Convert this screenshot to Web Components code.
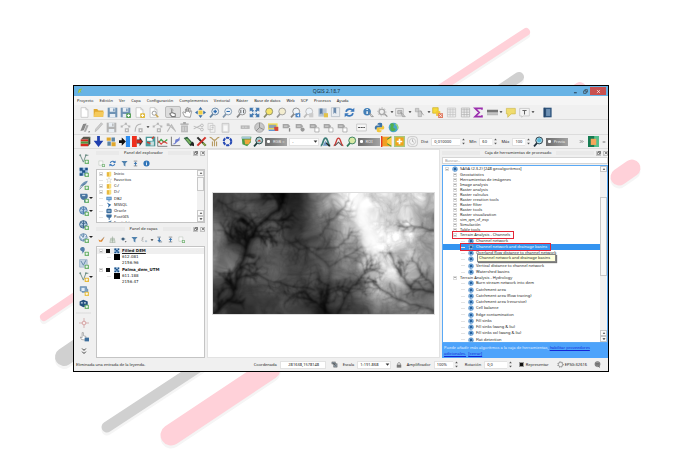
<!DOCTYPE html>
<html lang="es">
<head>
<meta charset="utf-8">
<title>QGIS 2.18.7</title>
<style>
html,body{margin:0;height:100%}
body{background:#fff;font:4px/6px "Noto Sans","Open Sans",sans-serif;color:#222}
</style>
</head>
<body>
<qgis-page></qgis-page>
<script>
const RESET = `*{box-sizing:border-box}button,input,select{font:inherit;color:inherit;margin:0;padding:0;border:0;background:none;border-radius:0;appearance:none;-webkit-appearance:none;min-width:0;outline:none}`;
function define(name, html, setup) {
  customElements.define(name, class extends HTMLElement {
    connectedCallback() {
      if (this.shadowRoot) return;
      const root = this.attachShadow({mode: 'open'});
      root.innerHTML = typeof html === 'function' ? html(this) : html;
      if (setup) setup(this, root);
    }
  });
}

/* ---------- icons, 16 x 16 grid ---------- */
const B = '#3f72a8', G = '#aaa';
const plus = (c = '#6fb36f') => `<rect x="9" y="9" width="7" height="7" rx="1" fill="${c}"/><path d="M12.500 10.500v4M10.500 12.500h4" stroke="#fff" stroke-width="1.500"/>`;
const lens = (c, inner = '', f = '#eef3f8') => `<path d="M6 10L1.500 15" stroke="${c}" stroke-width="2.500"/><circle cx="9" cy="6.500" r="5" fill="${f}" stroke="${c}" stroke-width="1.300"/>${inner}`;
const page = (x = '') => `<path d="M3 1h7l3 3v11H3z" fill="#fff" stroke="#bbb"/><path d="M10 1v3h3" fill="none" stroke="#bbb"/>${x}`;
const disk = c => `<path d="M1 1h14v14H1z" fill="${c}"/><path d="M4 1h8v6H4zM4 10h8v5H4z" fill="#e8eef4"/><path d="M9 2h2v4H9z" fill="${c}"/>`;
const label = (x, c = '#a5a5a5') => `<path d="M1 3h8l3 3-3 3H1z" fill="${c}"/><path d="M3 6h5" stroke="#eee"/>${x}`;
const sheet = c => `<path d="M2 1.500h12v13H2z" fill="#eee" stroke="${c}"/><path d="M2 4h12M2 7.500h12M2 11h12M6 2v12M10 2v12" stroke="${c}"/>`;
const globe = c => `<circle cx="7" cy="7" r="6" fill="#b8cfe4" stroke="${c}" stroke-width="1.300"/><path d="M2 5c4-3 4 4 6 1s3-1 4 0M3 10c3-2 5 2 8-1M7 1v12" fill="none" stroke="${c}" stroke-width="1.400"/>`;
const checker = `<path d="M1 1h13v13H1z" fill="#9fc0e2"/><path d="M1 1h5v4h4V1h4v4h-4v4h4v5H9V9H6v5H1v-4h4V6H1z" fill="#1d5288"/>`;
const vee = `<path d="M2 2l5 11 4-11h4" fill="none" stroke="#6f8f86" stroke-width="1.500"/><circle cx="2" cy="2" r="1.500" fill="#6f8f86"/><circle cx="11" cy="2" r="1.500" fill="#6f8f86"/>`;
const ICON = {
  logo: `<path d="M2 14L5 3l9-2-3 5-2 1 3 6-4-3z" fill="#8bbf3a"/><path d="M5 12l4-7" stroke="#e8d34a" stroke-width="2"/>`,
  page: page(),
  folder: `<path d="M1 3h5l2 2h7v9H1z" fill="#e0a82e"/><path d="M3 7h13l-2 7H1z" fill="#f5ca5b"/>`,
  save: disk('#6f93b5'), saveas: disk('#6f93b5') + plus('#5ba15b'),
  composer: page(plus('#e0b93c')), composers: page('<circle cx="9" cy="9" r="3" fill="none" stroke="#777"/><path d="M11 11l4 4" stroke="#c9a44b" stroke-width="2"/>'),
  touch: `<path d="M7 8l5 2v4H7l-3-4zM7 9V2" fill="#fff" stroke="#777" stroke-width="1.500"/><path d="M4 2l6 3" stroke="#aaa"/>`,
  hand: `<path d="M4 14L1 8l2-1 2 2V3h2v4V1h2v6l1-5h2l-1 6 2-3 1 1-2 9z" fill="#fff" stroke="#777"/>`,
  pansel: `<path d="M8 0l3 4H5zM8 16l-3-4h6zM0 8l4-3v6zM16 8l-4 3V5z" fill="#3a6ea5"/><path d="M5 5h6v6H5z" fill="#f0cf45"/>`,
  zin: lens('#60809f', '<path d="M6.500 6.500h5M9 4v5" stroke="#2d6cb0" stroke-width="2"/>'),
  zout: lens('#7d93aa', '<path d="M6.500 6.500h5" stroke="#2d6cb0" stroke-width="1.500"/>'),
  z11: lens('#888', '<path d="M7 4v5M11 4v5" stroke="#555" stroke-width="1.300"/>'),
  zfull: `<path d="M1 1h6L5 3l3 3-2 2-3-3-2 2zM15 1v6l-2-2-3 3-2-2 3-3-2-2zM1 15V9l2 2 3-3 2 2-3 3 2 2zM15 15H9l2-2-3-3 2-2 3 3 2-2z" fill="#4278b0"/><path d="M6 6h4v4H6z" fill="#dbe7f3"/>`,
  zsel: lens('#8a8a6a', '', '#f5e46a'), zlay: lens('#999', '', '#f3edd0'),
  zprev: lens('#888', '<path d="M15 9v6H8v-6z" fill="#4d86c6"/><path d="M13 10l-3 2 3 2" fill="#fff"/>'),
  znext: lens('#bbb', '<path d="M15 9v6H9v-6z" fill="#ccc"/>'),
  bmnew: `<path d="M2 2h12v12H2z" fill="#b9c6d3"/><path d="M4 2h4v9L6 9l-2 2z" fill="#5d7fa5"/><path d="M10 9h6v6h-6z" fill="#e2c24a"/>`,
  bm: `<path d="M2 1h12v13H2z" fill="#e9edf1" stroke="#aab4bf"/><path d="M5 1h4v9L7 8l-2 2z" fill="#6c8aac"/>`,
  refresh: `<path d="M3 7c1-5 8-5 10-2M13 9c-1 5-8 5-10 2" fill="none" stroke="#3b78bb" stroke-width="2.500"/><path d="M15 1v6H9zM1 15V9h6z" fill="#3b78bb"/>`,
  ident: `<circle cx="6" cy="7" r="5.500" fill="#4480b8"/><path d="M6 6v4M6 3v1.500" stroke="#fff" stroke-width="2"/><path d="M9 8l6 6h-3z" fill="#fff" stroke="#777"/>`,
  gear: `<circle cx="7" cy="7" r="4" fill="none" stroke="${G}" stroke-width="2" /><circle cx="7" cy="7" r="6" fill="none" stroke="${G}" stroke-dasharray="2 2.500"/><path d="M11 10l4 4" stroke="#999" stroke-width="2"/>`,
  select: `<path d="M1 2h11v11H1z" fill="#eee" stroke="${G}"/><path d="M4 5h6v5H4zM8 7l7 7h-4z" fill="#ccc" stroke="#999"/>`,
  selform: `<path d="M2 2h5v5H2zM6 6h5v8H6z" fill="#ccc" stroke="#aaa"/><path d="M9 5l5 7" stroke="#888"/>`,
  deselect: `<path d="M1 1h8v8H1z" fill="#f6db3a" stroke="#c9ad28"/><path d="M6 6h6v7H6z" fill="#f3c93a"/><path d="M9 9h7v7H9z" fill="#e07b62"/><path d="M10.500 10.500l4 4m0-4l-4 4" stroke="#fff"/>`,
  table: sheet('#c2c2c2'), calc: sheet('#b0b0b0') , sigma: `<path d="M13 4V2H3l6 6-6 6h10v-2" fill="none" stroke="#9b2fae" stroke-width="2.500"/>`,
  ruler: `<path d="M0 4h16v4H0z" fill="#777"/><path d="M0 9h16v3H0z" fill="#bbb"/>`,
  tip: `<path d="M2 2h13v8H9l-5 5v-5H2z" fill="#f0dc6e" stroke="#cdb94d"/>`,
  text: `<path d="M1 2h14v11H6l-2 2v-2H1z" fill="#f4f4f4" stroke="#bbb"/><path d="M5 5h6M8 5v6" stroke="#666" stroke-width="1.500"/>`,
  book: `<path d="M2 1h12v14H2z" fill="#30567e"/><path d="M6 3h6v10H6z" fill="#6f92b5"/><path d="M4 1v14" stroke="#1b3858"/>`,
  pens: `<path d="M2 13L6 3l5-1-4 10z" fill="#888"/><path d="M7 14L11 4l3 1-4 9z" fill="#aaa"/><path d="M13 15h3l-1-2z" fill="#555"/>`,
  pen: `<path d="M3 14l1-4 8-9 2 2-8 9z" fill="#ccc" stroke="#b5b5b5"/>`,
  saveg: disk('#b4b4b4'),
  nodes: `<path d="M3 6l5-3 5 3" fill="none" stroke="#bbb"/><path d="M1 5h3v3H1zM7 1h3v3H7zM12 5h3v3h-3zM7 9h6v6H7z" fill="#b5b5b5"/><path d="M9 11h2v2H9z" fill="#fff"/>`,
  curve: `<path d="M3 14C3 6 7 3 12 3" fill="none" stroke="#b5b5b5" stroke-width="1.500"/><path d="M8 9h6v6H8z" fill="#b5b5b5"/><path d="M10 11h2v2h-2z" fill="#fff"/>`,
  nodetool: `<path d="M2 14L8 4l6 10M3 3l10 9" fill="none" stroke="#b9b9b9" stroke-width="1.500"/><path d="M1 2h4v4H1z" fill="#bbb"/>`,
  trash: `<path d="M3 5h10v10H3z" fill="#bbb"/><path d="M2 2h12v2H2zM6 0h4v2H6z" fill="#a8a8a8"/><path d="M6 7v6M10 7v6" stroke="#eee"/>`,
  cut: `<path d="M1 6l10 4M1 10l10-5" stroke="#bbb" stroke-width="1.500"/><circle cx="13" cy="5" r="2" fill="none" stroke="#aaa"/><circle cx="13" cy="11" r="2" fill="none" stroke="#aaa"/>`,
  copy: `<path d="M3 2h7v9H3zM6 5h7v10H6z" fill="#f2f2f2" stroke="#c2c2c2"/><path d="M8 8h3" stroke="#bbb"/>`,
  paste: `<path d="M3 2h10v13H3z" fill="#e2e2e2" stroke="#bdbdbd"/><path d="M5 5h6v8H5z" fill="#f8f8f8"/>`,
  lab: `<path d="M1 5h13v5H1z" fill="#b5b5b5"/><path d="M3 7.500h9" stroke="#eee" stroke-dasharray="3 1"/>`,
  diagram: `<circle cx="8" cy="8" r="7" fill="#c9c9c9" stroke="#999"/><path d="M8 8V1M8 8l6 3M8 8l-5 5" stroke="#777"/>`,
  labcolor: `<path d="M0 2h14v9H0z" fill="#f3dc4d"/><path d="M1 4h11v5H1z" fill="#8fa3b5"/><path d="M9 7h6v6H9z" fill="#d4483b"/><path d="M1 12h9" stroke="#5c8fcf" stroke-width="2"/>`,
  lab1: label('<path d="M11 9v5" stroke="#888" stroke-width="2"/>'), lab2: label('<circle cx="11" cy="11" r="3" fill="#999"/>'),
  lab3: label('<path d="M8.500 8.500h6v6h-6z" fill="#fff" stroke="#999"/>'),
  csw: `<path d="M1 3h14v10H1z" fill="#f7f7f7" stroke="#bbb"/><path d="M3 8h10" stroke="#555" stroke-width="1.500" stroke-dasharray="3 .8"/>`,
  python: `<path d="M8 1c4 0 4 1 4 4v3H6c-2 0-2 2-2 3H2c-2-3 0-6 2-6h4V4H5c0-2 1-3 3-3z" fill="#3c74a8"/><path d="M8 15c-4 0-4-1-4-4V8h6c2 0 2-2 2-3h1c4 3 1 6 0 6H8v1h3c0 2-1 3-3 3z" fill="#f2c63a"/>`,
  earth: `<circle cx="8" cy="8" r="7" fill="#4ba7c8"/><path d="M3 3c4-3 7 0 5 3s4 3 3 5-5 4-7 1 1-5-1-9z" fill="#52b04c"/><path d="M11 3c3 1 4 5 3 7" stroke="#9edb72" stroke-width="2" fill="none"/>`,
  cube: `<path d="M1 5l4-4h10l-3 4z" fill="#5a564b"/><path d="M1 5h11v3H1zM1 11h11v4H1z" fill="#d62b1f"/><path d="M1 8h11v3H1z" fill="#4e9a3e"/><path d="M12 5l3-4v10l-3 4z" fill="#31442a"/>`,
  down: `<path d="M6 0h4v7h5l-7 9-7-9h5z" fill="#1e3fae"/>`,
  bricks: `<path d="M1 2h6v5H1zM8 9h6v6H8z" fill="#e0a72c"/><path d="M8 2h5v6H8zM2 8h5v6H2z" fill="#5f86a5"/>`,
  inb: `<path d="M10 0h6v16h-6z" fill="#2d8df0"/><path d="M4 2l6 6-6 6v-4H0V6h4z" fill="#111"/>`,
  out: `<path d="M0 0h7v16H0z" fill="#ee2f1c"/><path d="M7 5h4V1l5 7-5 7v-4H7z" fill="#333"/><path d="M7 6h7v4H7z" fill="#d0271a"/>`,
  clip: `<path d="M1 1h14v14H1z" fill="#4b9a9b"/><path d="M3 3h8v4H3z" fill="#fff"/><path d="M3 9l10 4M10 4l3-3" stroke="#d43b2d" stroke-width="2"/><path d="M8 8h5v6H8z" fill="#c6e0e0"/>`,
  chart: `<path d="M1 1v14h14" fill="none" stroke="#555"/><path d="M2 10l4-5 4 4 5-4" fill="none" stroke="#3da349" stroke-width="2"/><path d="M2 7l4 5 4-4 5 3" fill="none" stroke="#dd3b3b" stroke-width="1.500"/>`,
  scatter: `<path d="M2 1v13h13" fill="none" stroke="#444"/><path d="M3 12l4-2 1-5 4-1 2-3v5l-4 3-3 3z" fill="#6d7bd0"/>`,
  sat: `<path d="M1 3l5-2 9 10-4 4z" fill="#2d5d3f"/><path d="M3 4l4 0 5 6-2 2z" fill="#79b35f"/><path d="M10 13l4-5 2 3v4z" fill="#222"/>`,
  tools: `<path d="M2 2l12 12" stroke="#2f2f2f" stroke-width="3"/><path d="M14 2L2 14" stroke="#d2332a" stroke-width="3"/><path d="M10 10l4 4" stroke="#87a44b" stroke-width="3"/>`,
  branch: `<path d="M8 15V5M8 6C4 6 6 2 1 2M8 6c4 0 2-4 7-4M5 15V8M11 15V8" fill="none" stroke="#b79b62" stroke-width="1.600"/>`,
  ring: `<circle cx="8" cy="8" r="5.500" fill="none" stroke="#274bb5" stroke-width="3" stroke-dasharray="4.500 1.300"/>`,
  poly: `<path d="M1 1h14l-1 8-5 6-7-3z" fill="#4d9b45"/><path d="M5 5h10l-4 7H6z" fill="#f0a63c"/><path d="M1 1h13v3H1z" fill="#a6c7d8"/>`,
  lens1: lens('#1f3c3c', '<path d="M6 8l3-3 3 3z" fill="#d9483a"/>', '#a9cfd0'),
  lens2: lens('#2d7a5a', '', '#d9e9a5'), lens3: lens('#1f2f3c', '<circle cx="9" cy="6" r="3" fill="#5cb9d9"/>', '#b5e0ea'),
  hist1: `<path d="M1 14c4 0 3-11 7-11s3 11 7 11" fill="none" stroke="#3b7d77" stroke-width="2.500"/><path d="M4 14l4-7 4 7z" fill="#7098c3"/><path d="M9 10l5 5" stroke="#222" stroke-width="2"/>`,
  hist2: `<path d="M1 14c4 0 3-11 7-11s3 11 7 11" fill="none" stroke="#c93a35" stroke-width="2"/><path d="M3 14l5-5 5 5" fill="none" stroke="#555" stroke-width="1.500"/>`,
  orange: `<path d="M1 1h14v14H1z" fill="#f0a023"/><path d="M15 1L9 6v5l6 4z" fill="#ffd044"/><path d="M9 5l6-4M9 11l6 4" stroke="#3e9c42" stroke-width="1.500"/><path d="M1 0v16" stroke="#e53a25" stroke-width="2"/>`,
  oplus: `<path d="M0 0h16v16H0z" fill="#a9c77b"/><path d="M2 2h12v12H2z" fill="#f2a419"/><path d="M8 4v8M4 8h8" stroke="#fff" stroke-width="2.500"/>`,
  clock: `<rect x="1" y="1" width="14" height="14" rx="4" fill="#f3f3f3" stroke="#b5b5b5"/><circle cx="8" cy="8" r="4.500" fill="none" stroke="#bbb"/><path d="M8 5v3l2 1" stroke="#999" fill="none"/>`,
  gate: `<path d="M0 0h16v16H0z" fill="#167c52"/><path d="M9 0h7v16H9z" fill="#55c08d"/><path d="M4 4h8v9H4z" fill="#f5a75b"/>`,
  vplus: vee + plus(), rplus: checker + plus(), feather: `<path d="M1 14C2 6 8 2 14 1c-1 6-7 8-11 9z" fill="#6f93b4"/><path d="M1 15L9 6" stroke="#365b7f"/>` + plus(),
  pg: `<path d="M2 1h11c2 3 1 8-2 9v5H8v-4c-5 0-7-5-6-10z" fill="#48759f"/><path d="M5 4h5" stroke="#c9dbe9" stroke-width="2"/>` + plus(),
  wms: globe(B) + plus(), wcs: globe('#2a5680') + plus(), wfs: globe('#6487aa') + '<path d="M2 4l4 6 5-7" fill="none" stroke="#fff" stroke-width="1.500"/>' + plus(),
  comma: `<path d="M4 2c4-2 7 2 4 7l-4 4c2-3 2-4 0-5-3-1-3-5 0-6z" fill="#537fa9"/>` + plus(),
  virt: `<path d="M1 1h12v12H1z" fill="#c5d5e3" stroke="#8aa5bd"/><path d="M3 3l4 7 4-8" fill="none" stroke="#5f83a5" stroke-width="1.500"/>` + plus(),
  vnew: vee + plus('#e6b93a'), shp: `<path d="M2 1h10v4h2v5H5V8H2z" fill="#7ea1c2" stroke="#507ba3"/><path d="M4 3h5v5H4z" fill="#e2ecf5"/>` + plus('#e8c24b'),
  gpkg: `<path d="M1 4l6-3 7 3v6l-7 3-6-3z" fill="#23507e"/><path d="M3 5h3v2H3zM8 5h3v2H8z" fill="#d0dfec"/>` + plus(),
  cross: `<path d="M0 8h16M8 0v16" stroke="#c9a2a2" stroke-width="1.200"/><circle cx="8" cy="8" r="3" fill="#f6eded" stroke="#c77d7d"/>`,
  handid: `<path d="M4 12L2 8l3 1V1h2v5l4 1v6z" fill="#fff" stroke="#888"/><path d="M9 9h7v6H9z" fill="#3d6f9d"/>`,
  more: `<path d="M5 4l3 3 3-3M5 9l3 3 3-3" fill="none" stroke="#333" stroke-width="1.500"/>`,
  chev: `<path d="M3 4l4 4-4 4M9 4l4 4-4 4" fill="none" stroke="#333" stroke-width="1.800"/>`,
  addl: `<path d="M2 2h9v10H2z" fill="#fafafa" stroke="#aab8aa"/>` + plus('#77b377'),
  filter: `<path d="M1 2h14l-5 6v7l-4-3V8z" fill="#4f81ad"/>`,
  collapse: `<path d="M4 1h8v3H4zM4 12h8v3H4z" fill="#a8a8a8"/><path d="M8 4l4 5H9v4H7V9H4z" fill="#3b74ad"/>`,
  expand: `<path d="M3 1h8v3H3zM6 12h8v3H6z" fill="#9ca6af"/><path d="M6 4h3v5h3l-4.500 5L3 9h3z" fill="#3b74ad"/>`,
  info: `<circle cx="8" cy="8" r="7" fill="#2f74b8"/><path d="M8 7v5M8 4v2" stroke="#fff" stroke-width="2"/>`,
  fold: `<path d="M2 3h6v12H2z" fill="#e9b93e"/><path d="M8 2h6v12l-6 2z" fill="#f8dc79"/>`,
  star: `<path d="M8 1l2 5h5l-4 3 2 6-5-3-5 3 2-6-4-3h5z" fill="#fff" stroke="#b8b8a4"/>`,
  db: `<path d="M1 2h14v9H1z" fill="#4a87c0"/><path d="M3 4h10v5H3z" fill="#86b5df"/><path d="M5 13h6" stroke="#4a87c0" stroke-width="2"/>`,
  ms: `<path d="M2 1l12 6-9 8 2-7z" fill="#2f6ba5"/>`, ora: `<rect x="1" y="2" width="14" height="12" rx="3" fill="#3a6c9d"/><path d="M4 8h8" stroke="#bcd2e6" stroke-width="3"/>`,
  pgs: `<path d="M1 1h14c1 6-1 9-5 9v5H7v-5C2 10 0 6 1 1z" fill="#3c6e9e"/>`, spat: `<path d="M1 14C2 6 8 2 15 1c-1 6-7 8-11 9z" fill="#5d86ac"/>`,
  brush: `<path d="M1 8l5 2 9-8-6 11H3z" fill="#e68b2f"/><path d="M8 10l6-8" stroke="#777"/>`,
  lgroup: `<path d="M4 5h8l2 10H2z" fill="#d8e0d8" stroke="#8c9f8c"/><path d="M8 1v14M4 9h8" stroke="#7e967e"/>`,
  eye: `<path d="M1 7c3-5 9-5 12 0-3 4-9 4-12 0z" fill="#a3b7c6"/><circle cx="7" cy="7" r="3" fill="#405f7c"/><path d="M11 12h4l-2 3z" fill="#444"/>`,
  eps: `<path d="M6 3c-5 0-4 4-1 4-5 0-4 6 1 5" fill="none" stroke="#999" stroke-width="1.500"/><path d="M9 10h5v4H9z" fill="#b5c6d3"/>`,
  raster: checker, saga: `<circle cx="8" cy="8" r="7" fill="#3d82c4"/><path d="M1 6h14M2 11h12M6 1l-2 14M11 1l-2 14" stroke="#d9eafa" stroke-width="1.200"/><path d="M5 5h6v6H5z" fill="#245f9c"/>`,
  track: `<path d="M2 2h8v5H2zM6 6h8v8H6z" fill="#8d9aa5" stroke="#555"/><path d="M5 5l6 6" stroke="#333"/>`,
  lock: `<path d="M2 7h12v8H2z" fill="#777"/><path d="M4 7c0-7 8-7 8 0" fill="none" stroke="#777" stroke-width="2"/>`,
  crs: `<circle cx="8" cy="8" r="5" fill="none" stroke="#777" stroke-width="1.500"/><circle cx="8" cy="8" r="6.500" fill="none" stroke="#777" stroke-width="2" stroke-dasharray="2 3.500"/>`,
  msg: `<circle cx="8" cy="7" r="6" fill="#999" stroke="#555"/><path d="M4 6h8M4 9h8" stroke="#333"/><path d="M9 12h4v4z" fill="#555"/>`,
  spin: `<path d="M8 1l3 4H5zM8 15l-3-4h6z" fill="#555"/>`,
  tri: `<path d="M2 5h12l-6 7z" fill="#333"/>`, up: `<path d="M3 11l5-6 5 6z" fill="#333"/>`,
  win: `<path d="M2 6h8v8H2zM6 6V2h8v8h-4" fill="none" stroke="#333" stroke-width="2"/>`,
  x: `<path d="M3 3l10 10M13 3L3 13" stroke="currentColor" stroke-width="2"/>`, min: `<path d="M3 12h9" stroke="#234" stroke-width="3"/>`
};
define('q-icon', el => `<style>:host{display:block;flex:none;width:var(--s,11px);height:var(--s,11px)}svg{display:block;width:100%;height:100%}</style><svg viewBox="0 0 16 16" aria-hidden="true">${ICON[el.getAttribute('name')] || ''}</svg>`);

/* a run of tool buttons; "v" in the list is a small drop-down arrow */
define('tool-group', el => `<style>${RESET}
:host{display:flex;align-items:center;min-width:0}
:host([vertical]){flex-direction:column}
button{display:flex;align-items:center;justify-content:center;flex:27 1 0;height:12px}
button.v{flex-grow:10;--s:4px}
button.on{background:#dcdcdc;border:1px solid #bbb;border-radius:2px}
:host([vertical]) button{width:100%;position:relative}
:host([vertical]) .dd::after{content:"";position:absolute;right:0;top:5px;border:2px solid transparent;border-top-color:#222;border-bottom:0}
</style>` + el.getAttribute('icons').split(' ').map(n => {
  const on = n.endsWith('!'), dd = n.endsWith('>'), k = n.replace(/[!>]/, '');
  return k === 'v' ? '<button class="v" aria-label="Más opciones"><q-icon name="tri"></q-icon></button>'
    : `<button class="${on ? 'on' : dd ? 'dd' : ''}" aria-label="${k}"><q-icon name="${k}"></q-icon></button>`;
}).join(''));

define('tool-bar', `<style>:host{display:flex;align-items:center;box-sizing:border-box;height:15px;flex:none;border-bottom:1px solid #dcdcdc;background:#f0f0f0}</style><slot></slot>`);

define('title-bar', `<style>${RESET}
:host{display:flex;align-items:center;height:10px;flex:none;background:#68b3e5;font-size:5px;line-height:8px;color:#1d3344}
.t{flex:1;text-align:center}
q-icon{--s:6px;margin-left:3px}
button{width:10px;height:8px;display:flex;align-items:center;justify-content:center}
button q-icon{--s:5px;margin:0}
.close{width:16px;background:#c8504f;color:#fff;margin-right:2px}
</style><q-icon name="logo"></q-icon><span class="t"><slot></slot></span>
<button aria-label="Minimizar"><q-icon name="min"></q-icon></button><button aria-label="Restaurar"><q-icon name="win"></q-icon></button><button class="close" aria-label="Cerrar"><q-icon name="x"></q-icon></button>`);

define('menu-bar', el => `<style>${RESET}:host{display:flex;gap:6px;padding:0 3px;height:9px;flex:none;align-items:center;background:#f5f5f5}button{line-height:8px;white-space:nowrap}</style>` +
  el.getAttribute('items').split('|').map(t => `<button>${t}</button>`).join(''));

define('scroll-bar', `<style>${RESET}
:host{display:flex;flex-direction:column;width:7px;flex:none;background:#f1f1f1}
button{height:6px;flex:none;background:#fafafa;border:1px solid #c8c8c8;display:flex;align-items:center;justify-content:center;--s:4px}
i{flex:var(--before,1)}b{flex:var(--thumb,3);background:#f8f8f8;border:1px solid #c8c8c8}u{flex:var(--after,5)}
</style><button aria-label="Subir"><q-icon name="up"></q-icon></button><i></i><b></b><u></u><button aria-label="Subir"><q-icon name="up"></q-icon></button><button aria-label="Bajar"><q-icon name="tri"></q-icon></button>`);

define('dock-panel', el => `<style>${RESET}
:host{display:flex;flex-direction:column;min-height:0;min-width:0}
header{display:flex;align-items:center;height:8px;gap:2px;flex:none}
h2{font:inherit;margin:0;white-space:nowrap;padding:0 3px}
.d{flex:1;height:4px;background:radial-gradient(circle,#d9d9d9 0 25%,transparent 60%) 0 0/2px 2px}
header button{width:5px;height:5px;border:1px solid #c4c4c4;display:flex;--s:4px;align-items:center;justify-content:center}
</style><header><span class="d"></span><h2>${el.getAttribute('heading')}</h2><span class="d"></span><button aria-label="Desacoplar"><q-icon name="win"></q-icon></button><button aria-label="Cerrar panel"><q-icon name="x"></q-icon></button></header><slot></slot>`);

define('tree-view', `<style>
:host{display:flex;flex:1 1 0px;min-height:0;box-sizing:border-box;background:#fff;border:1px solid #c4c4c4}
.rows{flex:1;min-width:0;overflow:hidden;padding-top:var(--top,1px)}
</style><div class="rows" role="tree"><slot></slot></div><slot name="bar"></slot>`);

define('tree-row', el => {
  const a = n => el.getAttribute(n);
  return `<style>${RESET}
:host{display:flex;align-items:center;height:6px;padding-left:calc(var(--d,0)*8px + 2px);white-space:nowrap}
:host([tight]){height:5px}
:host([tall]){height:7px}
:host([sel]){background:#3494f0;color:#fff}
:host([current]){background:#efefef}
:host([dj]){font-family:"DejaVu Sans",sans-serif}
:host([bold]){font-weight:700}
:host([under]) .l{text-decoration:underline}
.e{width:4px;height:4px;margin-right:3px;flex:none;border:1px solid #dcdcdc;background:linear-gradient(#aaa,#aaa) center/2px 1px no-repeat #fff;padding:0}
.n{width:4px;height:1px;margin-right:3px;flex:none;background:#e4e4e4}
q-icon{--s:6px;margin-right:2px}
.m{display:flex;align-items:center;height:100%}
:host([mark]) .m{outline:1px solid #e32636;padding-right:3px;position:relative;z-index:1}
.sw{width:6px;height:6px;background:#000;flex:none;margin-right:2px}
input{width:4px;height:4px;margin-right:4px;background:#111}
</style><span class="m">${a('e') ? '<button class="e" aria-label="Desplegar"></button>' : el.hasAttribute('noline') ? '' : '<span class="n"></span>'}
${el.hasAttribute('check') ? `<input type="checkbox" checked aria-label="Mostrar ${el.textContent}">` : ''}${a('icon') ? `<q-icon name="${a('icon')}"></q-icon>` : ''}${el.hasAttribute('swatch') ? '<span class="sw"></span>' : ''}<span class="l"><slot></slot></span></span>`;
}, el => { el.setAttribute('role', 'treeitem'); el.style.setProperty('--d', el.getAttribute('d') || 0); });

/* labelled text field with optional spin arrows or drop-down */
define('q-field', el => {
  const k = el.getAttribute('kind'), v = el.getAttribute('value') || '', l = el.getAttribute('label') || '';
  return `<style>${RESET}
:host{display:flex;align-items:center;min-width:0}
label{margin-right:3px;white-space:nowrap}
.b{flex:1;display:flex;align-items:center;height:8px;background:#fff;border:1px solid #e2e2e2;min-width:0}
input,select{width:100%;flex:1;height:6px;line-height:6px;padding-left:2px}
:host([center]) input{text-align:center}
q-icon{--s:5px}:host([kind=spin]) .b{border-right:0}:host([kind=spin]) q-icon{--s:7px}
</style>${l ? `<label for="f">${l}</label>` : ''}<span class="b">${k === 'select' ? `<select id="f" aria-label="${l || 'Selección'}"><option>${v}</option></select><q-icon name="tri"></q-icon>` : `<input id="f" type="text" value="${v}" aria-label="${l || 'Valor'}">`}</span>${k === 'spin' ? '<q-icon name="spin"></q-icon>' : ''}`;
});

define('dark-toggle', `<style>${RESET}
:host{display:flex;height:8px;background:linear-gradient(90deg,#6b6b6b,#a3a3a3);color:#eee;min-width:0}
label{display:flex;align-items:center;gap:3px;padding-left:2px;white-space:nowrap}
input{width:3px;height:3px;background:#fff;border-radius:1px}
</style><label><input type="radio"><slot></slot></label>`);

/* shaded elevation raster with dendritic drainage */
define('dem-raster', `<style>:host{display:block;flex:1}canvas{display:block;width:100%;box-shadow:0 0 0 1px #ddd}</style><canvas width="444" height="244" role="img" aria-label="Modelo digital de elevaciones"></canvas>`, (el, root) => {
  const c = root.querySelector('canvas'), g0 = c.getContext('2d'), W = 444, H = 244;
  const layer = document.createElement('canvas'); layer.width = W; layer.height = H;
  const g = layer.getContext('2d');
  let seed = 11; const rnd = () => (seed = (seed * 16807) % 2147483647) / 2147483647;
  const grid = [
    [62, 80, 40, 38, 150, 255, 205, 230, 195],
    [88, 66, 88, 48, 125, 215, 240, 215, 140],
    [135, 55, 100, 55, 95, 155, 255, 225, 150],
    [128, 88, 92, 72, 88, 120, 220, 190, 140],
    [52, 58, 70, 68, 58, 85, 160, 140, 100],
    [78, 40, 58, 75, 32, 62, 95, 125, 115]];
  const P = 64, N = Array.from({length: P * P}, rnd), sm = t => t * t * (3 - 2 * t);
  const noise = (x, y) => { const i = Math.floor(x), j = Math.floor(y), u = sm(x - i), v = sm(y - j), q = (a, b) => N[((b % P + P) % P) * P + (a % P + P) % P];
    return (q(i, j) * (1 - u) + q(i + 1, j) * u) * (1 - v) + (q(i, j + 1) * (1 - u) + q(i + 1, j + 1) * u) * v; };
  const im = g0.createImageData(W, H);
  for (let y = 0; y < H; y++) for (let x = 0; x < W; x++) {
    const wx = x + 22 * (noise(x / 30, y / 30) - .5), wy = y + 22 * (noise(x / 30 + 9, y / 30 + 5) - .5);
    const gx = Math.min(7.999, Math.max(0, wx / W * 8)), gy = Math.min(4.999, Math.max(0, wy / H * 5)), i = gx | 0, j = gy | 0, u = sm(gx - i), v = sm(gy - j);
    let b = (grid[j][i] * (1 - u) + grid[j][i + 1] * u) * (1 - v) + (grid[j + 1][i] * (1 - u) + grid[j + 1][i + 1] * u) * v;
    let r = 0, amp = .5, f = 1 / 28;
    for (let o = 0; o < 4; o++) { r += amp * (1 - Math.abs(2 * noise(wx * f + o * 7, wy * f + o * 3) - 1)); amp *= .5; f *= 2; }
    b *= .75 + .6 * (1 - r);
    const k = (y * W + x) * 4; im.data[k] = im.data[k + 1] = im.data[k + 2] = b; im.data[k + 3] = 255;
  }
  g0.putImageData(im, 0, 0); g.lineCap = g.lineJoin = 'round';
  function stream(pts, w, a) {
    g.strokeStyle = `rgba(0,0,0,${a})`;
    for (const [m, o] of [[1.2, .5], [3, .3], [6, .2]]) {
      g.globalAlpha = o; g.lineWidth = w * m; g.beginPath(); g.moveTo(...pts[0]);
      for (const p of pts.slice(1)) g.lineTo(...p); g.stroke();
    }
    g.globalAlpha = 1;
  }
  function grow(x, y, ang, len, w, a, depth) {
    const pts = [[x, y]];
    for (let s = 0; s < len; s += 5) {
      ang += (rnd() - .5) * .6; x += Math.cos(ang) * 5; y += Math.sin(ang) * 5; pts.push([x, y]);
      if (depth > 0 && rnd() < .5) grow(x, y, ang + (rnd() < .5 ? -1 : 1) * (.5 + rnd() * .5), len * (.3 + rnd() * .3), w * .75, a * .75, depth - 1);
    }
    stream(pts, w, a);
  }
  function river(raw, w, a, side, depth = 2) {
    const pts = [];
    for (let i = 0; i < raw.length - 1; i++) for (let t = 0; t < 6; t++) {
      const x = raw[i][0] + (raw[i + 1][0] - raw[i][0]) * t / 6 + (rnd() - .5) * 5, y = raw[i][1] + (raw[i + 1][1] - raw[i][1]) * t / 6 + (rnd() - .5) * 5;
      pts.push([x, y]);
      const an = Math.atan2(raw[i + 1][1] - raw[i][1], raw[i + 1][0] - raw[i][0]);
      if (rnd() < .65) grow(x, y, an + Math.PI + (rnd() < .5 ? -1 : 1) * (.6 + rnd() * .5), side * (.4 + rnd() * .8), w * .6, a * .6, depth);
    }
    pts.push(raw[raw.length - 1]); stream(pts, w, a);
  }
  river([[142, 0], [134, 32], [86, 70], [66, 112], [50, 160], [42, 205], [0, 244]], 3.5, .8, 38);
  river([[86, 60], [50, 40], [10, 15]], 1.5, .35, 26);
  river([[280, 80], [250, 110], [170, 112], [140, 90], [140, 30]], 1.5, .3, 26);
  river([[300, 110], [235, 148], [165, 92]], 1.5, .3, 28);
  river([[205, 195], [120, 180], [60, 150]], 1.5, .4, 26);
  river([[320, 145], [300, 165], [270, 200], [250, 244]], 2, .45, 30);
  river([[230, 185], [225, 244]], 2.5, .55, 34);
  river([[180, 200], [235, 244]], 2.5, .55, 30);
  river([[355, 120], [375, 160], [400, 192], [444, 200]], 2, .5, 28);
  river([[370, 66], [410, 68], [444, 76]], 1.5, .4, 18);
  river([[400, 130], [420, 165], [444, 190]], 1.5, .35, 22);
  river([[320, 180], [370, 215], [444, 238]], 1.5, .4, 28);
  river([[275, 15], [240, 50], [215, 85]], 1.5, .3, 28);
  g0.filter = 'blur(1px)'; g0.drawImage(layer, 0, 0);
  g0.filter = 'blur(7px)'; g0.strokeStyle = 'rgba(255,255,255,.85)';
  for (const l of [[[292, 0], [300, 50], [318, 100], [335, 120]], [[335, 130], [350, 160], [385, 188]]]) { g0.lineWidth = l[0][1] ? 10 : 30; g0.beginPath(); l.forEach((p, i) => i ? g0.lineTo(...p) : g0.moveTo(...p)); g0.stroke(); }
});

define('map-view', `<style>:host{display:flex;align-items:center;background:#fff;border:1px solid #e2e2e2;padding:0 5px;min-width:0}</style><dem-raster></dem-raster>`);

define('status-bar', `<style>${RESET}
:host{display:flex;align-items:center;height:13px;flex:none;padding:0 7px 0 2px;white-space:nowrap;background:#f0f0f0}
.m{flex:1}
q-icon{--s:7px}
q-icon,q-field,label{margin-left:5px}
label{display:flex;align-items:center;gap:2px}
input{width:5px;height:5px;background:#111;border:1px solid #999}
.c{display:flex;align-items:center;gap:1px;margin:0 7px 0 3px}
</style><span class="m">Eliminada una entrada de la leyenda.</span>
<q-field center label="Coordenada" value="281638,1578148" style="width:72px"></q-field><q-icon name="track"></q-icon>
<q-field kind="select" label="Escala" value="1:191.868" style="width:48px"></q-field><q-icon name="lock" style="--s:6px"></q-icon>
<q-field kind="spin" label="Amplificador" value="100%" style="width:53px"></q-field>
<q-field kind="spin" label="Rotación" value="0,0" style="width:49px"></q-field>
<label><input type="checkbox" checked>Representar</label>
<span class="c"><q-icon name="crs"></q-icon>EPSG:32616</span><q-icon name="msg" style="margin:0"></q-icon>`);

define('toolbox-panel', `<style>${RESET}
:host{display:flex;min-height:0}
dock-panel{flex:1}
.s{height:7px;flex:none;border:1px solid #d5d5d5;background:#fff;padding-left:2px;line-height:5px;margin-bottom:1px;width:100%}
.s::placeholder{color:#999}
tree-view{border-color:#5aa9f5;--top:0px}
scroll-bar{--before:26;--thumb:79;--after:56}
.hint{background:#4da3fb;color:#e4f1ff;padding:2px 2px 1px;flex:none;height:15px}
.hint a{color:#1426d8}
.tipwrap{position:relative;height:0}
.tip{position:absolute;left:34px;bottom:-6px;height:8px;line-height:6px;padding:0 5px 0 1px;background:#ffffdc;border:1px solid #888;box-shadow:1px 1px 1px #777;white-space:nowrap;z-index:2;color:#222}
</style><dock-panel heading="Caja de herramientas de procesado">
<input class="s" type="search" placeholder="Buscar..." aria-label="Buscar">
<tree-view id="t"><scroll-bar slot="bar"></scroll-bar></tree-view>
<div class="hint">Puede añadir más algoritmos a la caja de herramientas, <a href="#p">habilitar proveedores<br>adicionales.</a> &nbsp;<a href="#c">[cerrar]</a></div></dock-panel>`, (el, root) => {
  const groups = 'Geostatistics|Herramientas de imágenes|Image analysis|Raster analysis|Raster calculus|Raster creation tools|Raster filter|Raster tools|Raster visualization|sim_qm_of_esp|Simulación|Table tools'.split('|');
  const leaf = (t, x = '') => `<tree-row d="2" icon="saga" ${x}>${t}</tree-row>`;
  root.getElementById('t').insertAdjacentHTML('afterbegin',
    '<tree-row e="1" icon="saga">SAGA (2.3.2) [248 geoalgoritmos]</tree-row>' +
    groups.map(t => `<tree-row d="1" tight e="1">${t}</tree-row>`).join('') +
    '<tree-row d="1" e="1" mark>Terrain Analysis - Channels</tree-row>' +
    leaf('Channel network') + leaf('Channel network and drainage basins', 'sel mark') + leaf('Overland flow distance to channel network') +
    '<div class="tipwrap"><span class="tip" role="tooltip">Channel network and drainage basins</span></div>' +
    leaf('') + leaf('Vertical distance to channel network', 'tall') + leaf('Watershed basins') +
    '<tree-row d="1" tight e="1">Terrain Analysis - Hydrology</tree-row>' +
    'Burn stream network into dem|Catchment area|Catchment area (flow tracing)|Catchment area (recursive)|Cell balance|Edge contamination|Fill sinks|Fill sinks (wang &amp; liu)|Fill sinks xxl (wang &amp; liu)|Flat detection|'.split('|').map((t, i) => leaf(t, i % 4 == 1 ? 'tall' : '')).join(''));
});

define('browser-panel', `<style>
:host{display:flex;flex:none}
dock-panel{flex:1}
tool-group{height:12px;width:56px;--s:7px}
tree-view{height:54px;flex:none}
scroll-bar{--before:1;--thumb:12;--after:20}
</style><dock-panel heading="Panel del explorador"><tool-group icons="addl refresh filter collapse info"></tool-group>
<tree-view>
<tree-row e="1" icon="fold">Inicio</tree-row><tree-row icon="star">Favoritos</tree-row><tree-row e="1" icon="fold">C:/</tree-row><tree-row e="1" icon="fold">D:/</tree-row>
<tree-row tall icon="db">DB2</tree-row><tree-row icon="ms">MSSQL</tree-row><tree-row icon="ora">Oracle</tree-row><tree-row icon="pgs">PostGIS</tree-row><tree-row icon="spat">SpatiaLite</tree-row>
<scroll-bar slot="bar"></scroll-bar></tree-view></dock-panel>`);

define('layers-panel', `<style>
:host{display:flex;flex:1 1 0px;min-height:0}
dock-panel{flex:1}
tool-group{height:13px;width:91px;--s:7px}
</style><dock-panel heading="Panel de capas"><tool-group icons="brush lgroup eye filter eps v expand collapse addl"></tool-group>
<tree-view>
<tree-row e="1" check icon="raster" dj bold under current>Filled DEM</tree-row>
<tree-row d="1" swatch dj>612.081</tree-row><tree-row noline dj style="padding-left:25px">2156.96</tree-row>
<tree-row e="1" check icon="raster" dj bold tall>Palma_dem_UTM</tree-row>
<tree-row d="1" swatch dj>611.188</tree-row><tree-row noline dj style="padding-left:25px">2156.47</tree-row>
</tree-view></dock-panel>`);

define('qgis-window', `<style>
:host{display:flex;flex-direction:column;box-sizing:border-box;border:1px solid #000;background:#f0f0f0;min-width:0}
.work{flex:1 1 0px;display:grid;grid-template:minmax(0,1fr)/20px 109px 1fr 166px;gap:0 2px;min-height:0}
.side{display:flex;flex-direction:column;align-items:stretch;padding:3px 1px 0 0}
.side tool-group{--s:10px}
.sep{height:2px;margin:2px 2px;background:radial-gradient(circle,#ccc 0 25%,transparent 60%) 0 0/2px 2px;flex:none}
.left{display:flex;flex-direction:column;gap:2px;min-height:0}
.bar3 tool-group{min-width:0}
.bar3 q-field{margin-left:2px}
.bar3{height:14px}
</style>
<title-bar>QGIS 2.18.7</title-bar>
<menu-bar items="Proyecto|Edición|Ver|Capa|Configuración|Complementos|Vectorial|Ráster|Base de datos|Web|SCP|Procesos|Ayuda"></menu-bar>
<tool-bar>
<span style="flex:4"></span><tool-group style="flex:82 1 0" icons="page folder save saveas composer composers"></tool-group>
<span style="flex:5"></span><tool-group style="flex:191 1 0" icons="touch! hand pansel zin zout z11 zfull zsel zlay zprev znext bmnew bm refresh"></tool-group>
<span style="flex:6"></span><tool-group style="flex:174 1 0" icons="ident gear v select v selform v deselect table calc sigma ruler v tip text v"></tool-group>
<span style="flex:4"></span><tool-group style="flex:14 1 0" icons="book"></tool-group><span style="flex:54"></span>
</tool-bar>
<tool-bar>
<span style="flex:4"></span><tool-group style="flex:154 1 0" icons="pens pen saveg nodes curve v nodes nodetool trash cut copy paste"></tool-group>
<span style="flex:7"></span><tool-group style="flex:110 1 0" icons="lab diagram labcolor lab1 lab2 lab3 lab3 lab3"></tool-group>
<span style="flex:5"></span><tool-group style="flex:14 1 0" icons="csw"></tool-group>
<span style="flex:5"></span><tool-group style="flex:27 1 0" icons="python earth"></tool-group><span style="flex:208"></span>
</tool-bar>
<tool-bar class="bar3">
<span style="flex:5"></span><tool-group style="flex:154 1 0" icons="cube down bricks inb out clip chart scatter sat tools branch ring"></tool-group>
<span style="flex:6"></span><tool-group style="flex:25 1 0" icons="poly lens1"></tool-group>
<dark-toggle style="flex:22 1 0">RGB =</dark-toggle><q-field kind="select" value="-" style="flex:30 1 0"></q-field>
<tool-group style="flex:38 1 0" icons="hist1 hist2 lens2"></tool-group><dark-toggle style="flex:22 1 0">ROI</dark-toggle>
<tool-group style="flex:39 1 0" icons="orange oplus clock"></tool-group>
<q-field kind="spin" label="Dist" value="0,010000" style="flex:46 1 0"></q-field>
<q-field kind="spin" label="Mín" value="60" style="flex:30 1 0"></q-field>
<q-field kind="spin" label="Máx" value="100" style="flex:30 1 0"></q-field>
<tool-group style="flex:14 1 0" icons="lens3"></tool-group><dark-toggle style="flex:22 1 0">Previa</dark-toggle>
<span style="flex:9"></span><tool-group style="flex:10 1 0;--s:5px" icons="chev"></tool-group><tool-group style="flex:14 1 0" icons="gate"></tool-group><tool-group style="flex:7 1 0;--s:4px" icons="chev"></tool-group>
</tool-bar>
<div class="work">
<div class="side"><tool-group vertical style="flex:160 1 0px" icons="vplus rplus feather pg> wms> wcs wfs> comma virt vnew> shp gpkg"></tool-group><div class="sep"></div><tool-group vertical style="flex:42 1 0px" icons="cross handid more"></tool-group></div>
<div class="left"><browser-panel></browser-panel><layers-panel></layers-panel></div>
<map-view></map-view>
<toolbox-panel></toolbox-panel>
</div>
<status-bar></status-bar>`);

define('diagonal-stripes', () => {
  const s = [[526, 32, 436, 91, 8, 0], [519, 77, 480, 103, 10, 1], [580, 88, 560, 101, 12, 0], [632, 168, 619, 177, 17, 0], [44, 317, 90, 286, 8, 0], [64, 357, 92, 338, 18, 1], [107, 427, 200, 366, 11, 1], [171, 435, 270, 369, 21, 0]];
  const ln = ([a, b, c, d, w], o, col) => `<path d="M${a} ${b + o}L${c} ${d + o}" stroke="${col}" stroke-width="${w}" stroke-linecap="round"/>`;
  return `<style>:host{display:block}svg{display:block;width:100%;height:100%}</style><svg viewBox="0 0 687 462" preserveAspectRatio="none" aria-hidden="true">${s.map(l => ln(l, 3, '#f5f5f5')).join('')}${s.map(l => ln(l, 0, l[5] ? '#d0d0d0' : '#ffd1d9')).join('')}</svg>`;
});

define('qgis-page', `<style>
:host{display:flex;position:relative;min-height:100vh;box-sizing:border-box;padding:85px 78px 90px 73px}
diagonal-stripes{position:absolute;inset:0}
qgis-window{flex:1;position:relative}
</style><diagonal-stripes></diagonal-stripes><qgis-window></qgis-window>`);
</script>
</body>
</html>
